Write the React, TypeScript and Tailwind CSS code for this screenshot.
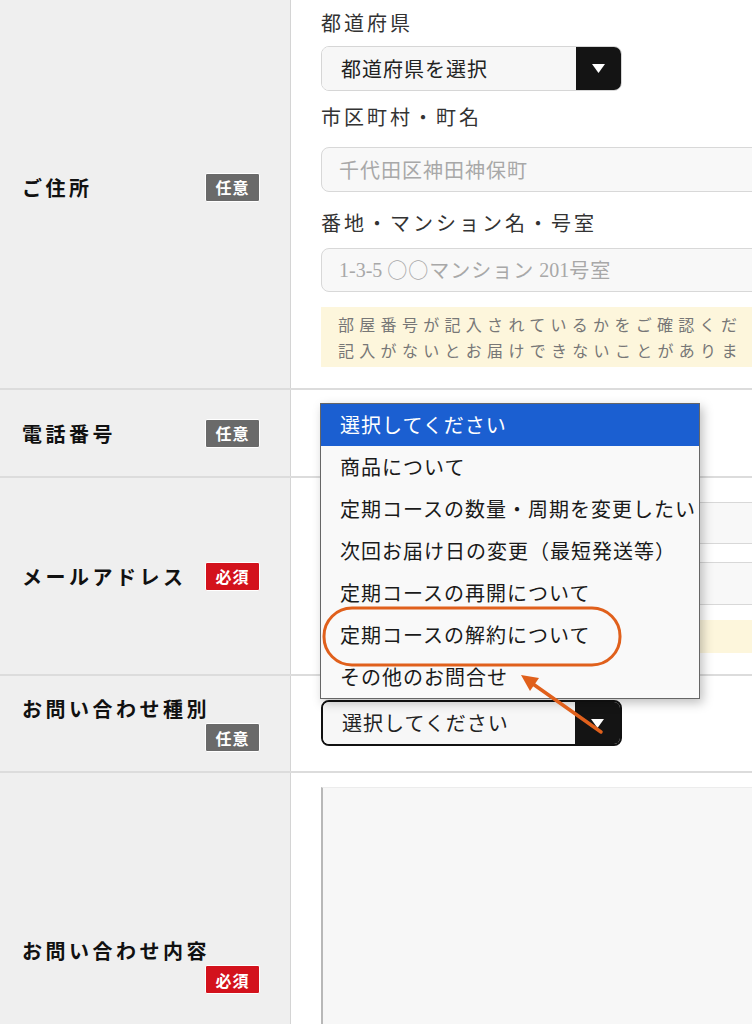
import type { ReactNode } from 'react';

const options = [
  '選択してください',
  '商品について',
  '定期コースの数量・周期を変更したい',
  '次回お届け日の変更（最短発送等）',
  '定期コースの再開について',
  '定期コースの解約について',
  'その他のお問合せ',
];

function Badge({ required }: { required?: boolean }) {
  return (
    <span
      className={`ml-auto flex h-[29px] w-[55px] items-center justify-center rounded-[2px] border border-white text-[16px] font-bold tracking-[1px] text-white ${
        required ? 'bg-[#d3121c]' : 'bg-[#6a6a6a]'
      }`}
    >
      {required ? '必須' : '任意'}
    </span>
  );
}

function Row({
  label,
  required,
  height,
  leftClass = '',
  children,
}: {
  label: string;
  required?: boolean;
  height: string;
  leftClass?: string;
  children?: ReactNode;
}) {
  return (
    <div className={`flex border-b-2 border-[#dcdcdc] ${height}`}>
      <div
        className={`flex w-[291px] shrink-0 flex-wrap content-center items-center gap-y-[1px] border-r border-[#d4d4d4] bg-[#efefef] pl-[22px] pr-[30px] ${leftClass}`}
      >
        <span className="whitespace-nowrap text-[20px] leading-[27px] font-bold tracking-[3.5px] text-[#111]">
          {label}
        </span>
        <Badge required={required} />
      </div>
      <div className="min-w-0 flex-1 overflow-hidden bg-white pl-[30px]">{children}</div>
    </div>
  );
}

function FieldLabel({ children, className = '' }: { children: ReactNode; className?: string }) {
  return (
    <div className={`h-[28px] whitespace-nowrap text-[20px] leading-[28px] tracking-[3px] text-[#333] ${className}`}>
      {children}
    </div>
  );
}

function Caret() {
  return (
    <svg width="13" height="9" viewBox="0 0 13 9">
      <polygon points="0,0 13,0 6.5,9" fill="#fff" />
    </svg>
  );
}

function SelectBox({ text, dark, className = '' }: { text: string; dark?: boolean; className?: string }) {
  return (
    <div
      className={`flex w-[301px] overflow-hidden rounded-[8px] ${
        dark ? 'border-2 border-[#111]' : 'border border-[#d6d6d6]'
      } ${className}`}
    >
      <div className="flex flex-1 items-center bg-[#f7f7f7] pl-[19px] text-[20px] tracking-[1px] text-[#222]">
        {text}
      </div>
      <div className="flex w-[45px] items-center justify-center bg-[#141414]">
        <Caret />
      </div>
    </div>
  );
}

function TextInput({ children, className = '' }: { children?: ReactNode; className?: string }) {
  return (
    <div
      className={`flex w-[450px] shrink-0 items-center whitespace-nowrap rounded-l-[8px] border border-[#d8d8d8] bg-[#f8f8f8] pl-[17px] text-[20px] tracking-[1px] text-[#a8a8a8] ${className}`}
    >
      {children}
    </div>
  );
}

export default function App() {
  return (
    <div className="relative h-[1024px] w-[752px] overflow-hidden bg-white font-['Noto_Sans_CJK_JP',sans-serif]">
      <Row label="ご住所" height="h-[390px]" leftClass="pb-[14px]">
        <div className="pt-[9px]">
          <FieldLabel>都道府県</FieldLabel>
          <SelectBox text="都道府県を選択" className="mt-[9px] h-[45px]" />
          <FieldLabel className="mt-[12px]">市区町村・町名</FieldLabel>
          <TextInput className="mt-[16px] h-[45px]">千代田区神田神保町</TextInput>
          <FieldLabel className="mt-[17px]">番地・マンション名・号室</FieldLabel>
          <TextInput className="mt-[11px] h-[44px]">
            <span className="font-['Liberation_Serif',serif] tracking-[0px]">1-3-5&nbsp;</span>
            <span>○○マンション</span>
            <span className="font-['Liberation_Serif',serif] tracking-[0px]">&nbsp;201</span>
            <span>号室</span>
          </TextInput>
          <div className="mt-[15px] h-[60px] w-[450px] overflow-hidden whitespace-nowrap bg-[#fdf6dc] pl-[17px] pt-[4px] text-[16px] leading-[26px] tracking-[5.3px] text-[#777]">
            <div>部屋番号が記入されているかをご確認くだ</div>
            <div>記入がないとお届けできないことがありま</div>
          </div>
        </div>
      </Row>

      <Row label="電話番号" height="h-[88px]" />

      <Row label="メールアドレス" required height="h-[198px]">
        <div className="pt-[24px]">
          <TextInput className="h-[42px]" />
          <TextInput className="mt-[18px] h-[43px]" />
          <div className="mt-[15px] h-[33px] w-[450px] bg-[#fdf6dc]" />
        </div>
      </Row>

      <Row label="お問い合わせ種別" height="h-[97px]">
        <SelectBox text="選択してください" dark className="mt-[24px] h-[46px] w-[300px]" />
      </Row>

      <Row label="お問い合わせ内容" required height="h-[387px]">
        <div className="pt-[14px]">
          <div className="h-[360px] w-[450px] border-l-2 border-t border-[#b8b8b8] border-t-[#ececec] bg-[#f7f7f7]" />
        </div>
      </Row>

      {/* open select list */}
      <div className="absolute left-[320px] top-[403px] z-10 w-[380px] border border-[#666] bg-[#f9f9f9] shadow-[3px_4px_10px_rgba(0,0,0,0.25)]">
        {options.map((o, i) => (
          <div
            key={o}
            className={`flex h-[42px] items-center whitespace-nowrap pl-[19px] text-[20px] tracking-[1px] ${
              i === 0 ? 'bg-[#1b5fd1] text-white' : 'text-[#1a1a1a]'
            }`}
          >
            {o}
          </div>
        ))}
      </div>

      {/* annotation */}
      <svg
        className="pointer-events-none absolute left-[310px] top-[595px] z-20"
        width="320"
        height="150"
        viewBox="0 0 320 150"
      >
        <rect x="14" y="13" width="296" height="57" rx="28" ry="28" fill="none" stroke="#e0601c" strokeWidth="3" />
        <line x1="291" y1="137" x2="223" y2="89" stroke="#e0601c" strokeWidth="3.5" strokeLinecap="round" />
        <polygon points="211,80 229,83 220,96" fill="#e0601c" />
      </svg>
    </div>
  );
}
